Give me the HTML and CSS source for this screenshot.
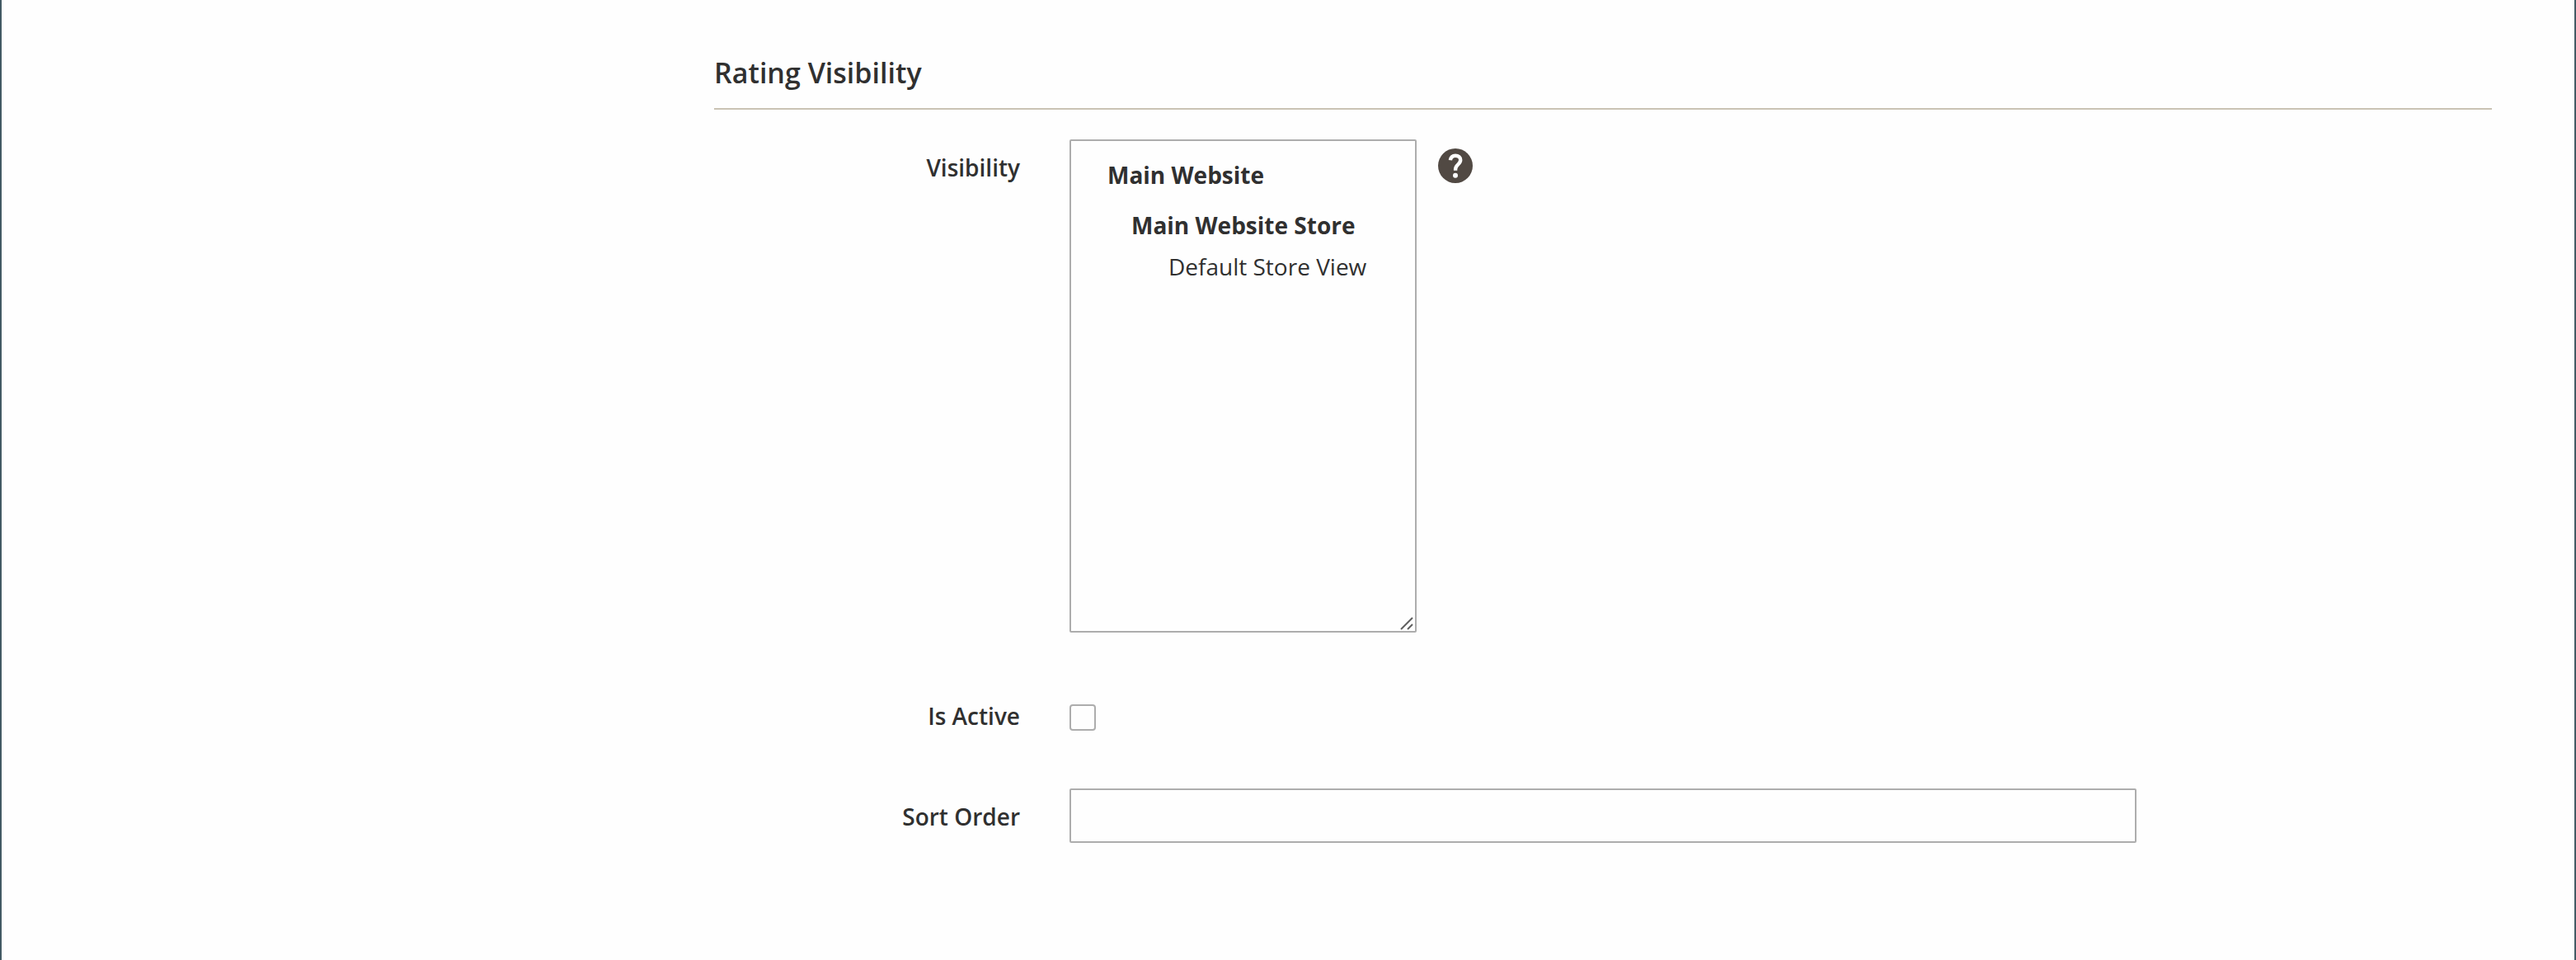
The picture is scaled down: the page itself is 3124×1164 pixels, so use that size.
FILE: index.html
```html
<!DOCTYPE html>
<html lang="en">
<head>
<meta charset="utf-8">
<title>Rating Visibility</title>
<link rel="stylesheet" href="styles.css">
</head>
<body>
<main class="page">
  <form class="fieldset">
    <h2 class="legend">Rating Visibility</h2>
    <div class="field field-visibility">
      <span class="label">Visibility</span>
      <div class="multiselect" role="listbox" aria-label="Visibility">
        <div class="website">Main Website</div>
        <div class="store">Main Website Store</div>
        <div class="view" role="option">Default Store View</div>
        <svg class="resizer" width="18" height="18" viewBox="0 0 18 18"><path d="M2 16 16 2M10 16l6-6"/></svg>
      </div>
      <svg class="help" width="42" height="42" viewBox="0 0 42 42">
        <circle class="help-disc" cx="21" cy="21" r="21"/>
        <path class="help-hook" d="M14.9 14.3C15.2 10.8 17.6 8.7 21 8.7c3.8 0 6.2 2.3 6.2 5.4 0 5-6.1 5.9-6.1 11v1.7"/>
        <circle class="help-dot" cx="21" cy="32.7" r="3"/>
      </svg>
    </div>
    <div class="field field-active">
      <label class="label" for="active">Is Active</label>
      <input class="checkbox" id="active" type="checkbox">
    </div>
    <div class="field field-sort">
      <label class="label" for="sort">Sort Order</label>
      <input class="text-input" id="sort" type="text">
    </div>
  </form>
</main>
</body>
</html>
```
FILE: styles.css
```css
* { box-sizing: border-box; }

body {
  margin: 0;
  background: #fefefe;
  color: #303030;
  font: 28px/40px "Open Sans", "Noto Sans", sans-serif;
}

.page {
  height: 1164px;
  padding: 65px 100px 0 864px;
  border: solid #435a64;
  border-width: 0 2px;
}

.fieldset { margin: 0; }

.legend {
  height: 68px;
  margin: 0 0 36px;
  border-bottom: 2px solid #cac3b4;
  font-size: 34px;
  font-weight: 600;
  line-height: 46px;
}

.field {
  display: flex;
  align-items: flex-start;
}

.label {
  width: 371px;
  margin-right: 60px;
  font-weight: 600;
  text-align: right;
}

.field-visibility { height: 598px; }
.field-visibility .label { padding-top: 14px; }

.multiselect {
  position: relative;
  width: 421px;
  height: 598px;
  padding: 21px 0 0 44px;
  border: 2px solid #adadad;
  border-radius: 2px;
  background: #fefefe;
}

.website,
.store { font-weight: 700; }
.store { margin-top: 21px; padding-left: 29px; }
.view { margin-top: 10px; padding-left: 74px; }

.resizer {
  position: absolute;
  right: 1px;
  bottom: 0;
  fill: none;
  stroke: #606060;
  stroke-width: 2;
}

.help { margin: 10.5px 0 0 26px; }
.help-disc { fill: #514943; }
.help-hook { fill: none; stroke: #fff; stroke-width: 4.4; }
.help-dot { fill: #fff; }

.field-active { margin-top: 81px; }

.checkbox {
  width: 32px;
  height: 32px;
  margin: 6px 0 0;
  appearance: none;
  border: 2px solid #adadad;
  border-radius: 4px;
  background: #fefefe;
}

.field-sort { margin-top: 68px; }
.field-sort .label { padding-top: 14px; }

.text-input {
  width: 1294px;
  height: 66px;
  padding: 0 18px;
  border: 2px solid #adadad;
  border-radius: 2px;
  background: #fefefe;
  color: inherit;
  font: inherit;
}
```
